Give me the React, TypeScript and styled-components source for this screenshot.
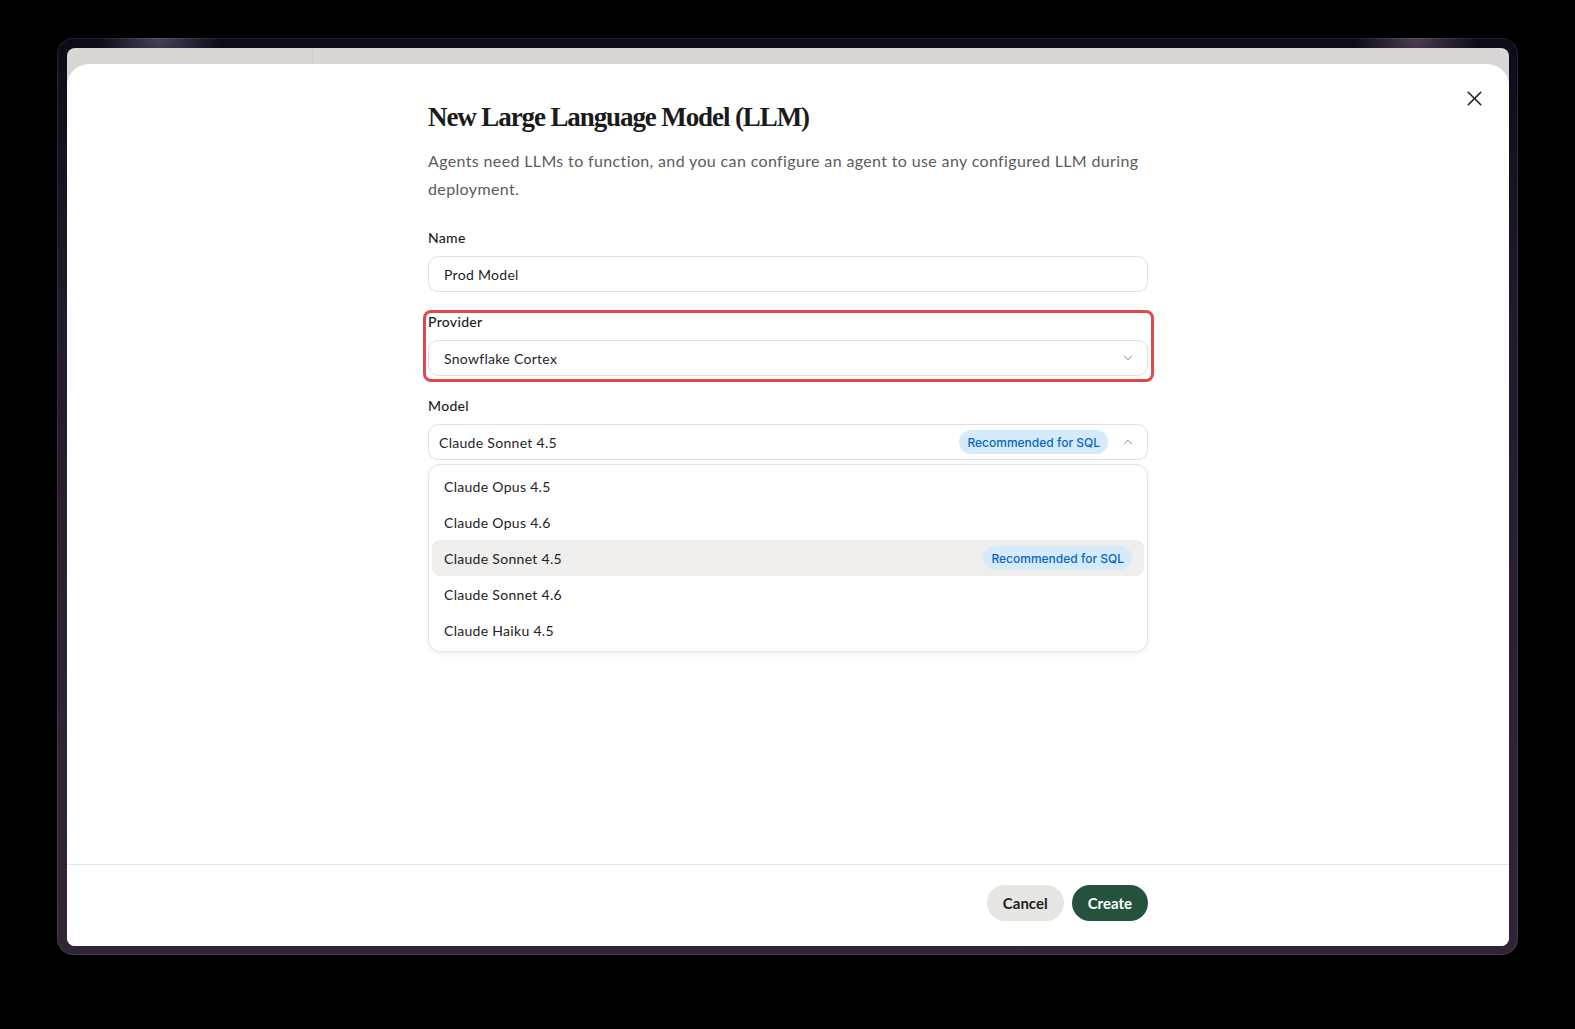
import styled, { createGlobalStyle } from "styled-components";
import { X, ChevronDown, ChevronUp } from "lucide-react";

const GlobalStyle = createGlobalStyle`
  html, body {
    margin: 0;
    background: #000;
  }
  * {
    box-sizing: border-box;
  }
`;

const Page = styled.div`
  min-height: 1029px;
  display: flex;
  justify-content: center;
  align-items: flex-start;
  padding-top: 38px;
  font-family: Lato, "DejaVu Sans", sans-serif;
  letter-spacing: 0.3px;
`;

const WindowFrame = styled.div`
  width: 1461px;
  height: 917px;
  padding: 10px 9px 9px 10px;
  border-radius: 16px;
  background: radial-gradient(circle at 7% 0%, rgba(120, 118, 150, 0.5), transparent 60px),
    radial-gradient(circle at 93% 0%, rgba(150, 120, 150, 0.45), transparent 60px),
    linear-gradient(180deg, #0e0b19 0%, #211a2a 30%, #2d2233 70%, #302435 100%);
  box-shadow: inset 0 0 0 1px rgba(255, 255, 255, 0.1);
`;

const Window = styled.div`
  width: 100%;
  height: 100%;
  display: flex;
  flex-direction: column;
  background: #d8d7d5;
  border-radius: 8px;
  overflow: hidden;
`;

const BackdropStrip = styled.div`
  height: 16px;
  display: flex;
  flex-shrink: 0;
`;

const GhostSidebar = styled.div`
  width: 246px;
  border-right: 1px solid #cfcecb;
`;

const Sheet = styled.div`
  flex: 1;
  display: flex;
  flex-direction: column;
  background: #fff;
  border-radius: 22px 22px 0 0;
`;

const Body = styled.div`
  flex: 1;
  display: grid;
  grid-template-columns: 1fr 720px 1fr;
`;

const Form = styled.div`
  grid-column: 2;
  display: flex;
  flex-direction: column;
  padding-top: 36px;
`;

const CloseButton = styled.button`
  grid-column: 3;
  justify-self: end;
  align-self: start;
  margin: 22px 22px 0 0;
  width: 25px;
  height: 25px;
  padding: 0;
  border: none;
  background: none;
  color: #1e1e1e;
  display: flex;
  align-items: center;
  justify-content: center;
  cursor: pointer;
`;

const Title = styled.h1`
  margin: 0;
  font-family: "Liberation Serif", "DejaVu Serif", serif;
  font-size: 27px;
  line-height: 34px;
  font-weight: 700;
  letter-spacing: -1.1px;
  color: #1b1b1b;
`;

const Description = styled.p`
  margin: 13px 0 0;
  font-size: 16px;
  line-height: 28px;
  letter-spacing: 0.36px;
  color: #5b5b5b;
`;

const Fields = styled.div`
  margin-top: 26px;
  display: flex;
  flex-direction: column;
  gap: 21px;
`;

const Field = styled.div<{ $highlight?: boolean }>`
  position: relative;
  display: flex;
  flex-direction: column;
  gap: 9px;

  &::after {
    content: "";
    display: ${(p) => (p.$highlight ? "block" : "none")};
    position: absolute;
    inset: -3px -6px -6px -5px;
    border: 3px solid #e2474c;
    border-radius: 8px;
    pointer-events: none;
  }
`;

const Label = styled.label`
  font-size: 14px;
  line-height: 18px;
  font-weight: 500;
  color: #1d1d1d;
`;

const TextInput = styled.input`
  width: 100%;
  height: 36px;
  padding: 0 15px;
  border: 1px solid #dedede;
  border-radius: 10px;
  font-family: inherit;
  font-size: 14px;
  letter-spacing: inherit;
  color: #1f1f1f;
  background: #fff;
  outline: none;
`;

const SelectBox = styled.div<{ $compact?: boolean }>`
  height: 36px;
  display: flex;
  align-items: center;
  gap: 13px;
  padding: 0 12px 0 ${(p) => (p.$compact ? "10px" : "15px")};
  border: 1px solid #dedede;
  border-radius: 10px;
  font-size: 14px;
  color: #1f1f1f;
  background: #fff;
`;

const SelectValue = styled.span`
  flex: 1;
`;

const Caret = styled.span`
  display: flex;
  color: #7a7a7a;
`;

const Badge = styled.span`
  display: inline-flex;
  align-items: center;
  height: 24px;
  padding: 0 8px;
  border-radius: 999px;
  background: #d5ebfc;
  color: #0a64c2;
  font-family: Inter, "DejaVu Sans", sans-serif;
  font-size: 12px;
  font-weight: 500;
  letter-spacing: 0;
`;

const Menu = styled.div`
  margin-top: 4px;
  padding: 3px;
  border: 1px solid #e4e4e4;
  border-radius: 12px;
  background: #fff;
  box-shadow: 0 2px 6px rgba(0, 0, 0, 0.06);
`;

const Option = styled.div<{ $active?: boolean }>`
  height: 36px;
  display: flex;
  align-items: center;
  justify-content: space-between;
  padding: 0 12px;
  border-radius: 8px;
  font-size: 14px;
  color: #222;
  background: ${(p) => (p.$active ? "#efeeec" : "transparent")};
`;

const Footer = styled.div`
  height: 82px;
  flex-shrink: 0;
  display: grid;
  grid-template-columns: 1fr 720px 1fr;
  padding-top: 20px;
  border-top: 1px solid #e6e6e6;
`;

const Actions = styled.div`
  grid-column: 2;
  display: flex;
  justify-content: flex-end;
  align-items: flex-start;
  gap: 8px;
`;

const Button = styled.button<{ $primary?: boolean }>`
  height: 36px;
  padding: 0 16px;
  border: none;
  border-radius: 18px;
  font-family: inherit;
  font-size: 15px;
  font-weight: 700;
  letter-spacing: 0;
  color: ${(p) => (p.$primary ? "#fff" : "#222")};
  background: ${(p) => (p.$primary ? "#25523d" : "#e6e5e1")};
  cursor: pointer;
`;

const models = [
  { name: "Claude Opus 4.5" },
  { name: "Claude Opus 4.6" },
  { name: "Claude Sonnet 4.5", recommended: true },
  { name: "Claude Sonnet 4.6" },
  { name: "Claude Haiku 4.5" },
];

const App = () => {
  const selected = "Claude Sonnet 4.5";
  return (
    <>
      <GlobalStyle />
      <Page>
        <WindowFrame>
          <Window>
            <BackdropStrip>
              <GhostSidebar />
            </BackdropStrip>
            <Sheet>
              <Body>
                <Form>
                  <Title>New Large Language Model (LLM)</Title>
                  <Description>
                    Agents need LLMs to function, and you can configure an agent to use any
                    configured LLM during deployment.
                  </Description>
                  <Fields>
                    <Field>
                      <Label>Name</Label>
                      <TextInput value="Prod Model" readOnly />
                    </Field>
                    <Field $highlight>
                      <Label>Provider</Label>
                      <SelectBox>
                        <SelectValue>Snowflake Cortex</SelectValue>
                        <Caret>
                          <ChevronDown size={14} strokeWidth={1.6} />
                        </Caret>
                      </SelectBox>
                    </Field>
                    <Field>
                      <Label>Model</Label>
                      <div>
                        <SelectBox $compact>
                          <SelectValue>{selected}</SelectValue>
                          <Badge>Recommended for SQL</Badge>
                          <Caret>
                            <ChevronUp size={14} strokeWidth={1.6} />
                          </Caret>
                        </SelectBox>
                        <Menu>
                          {models.map((m) => (
                            <Option key={m.name} $active={m.name === selected}>
                              <span>{m.name}</span>
                              {m.recommended && <Badge>Recommended for SQL</Badge>}
                            </Option>
                          ))}
                        </Menu>
                      </div>
                    </Field>
                  </Fields>
                </Form>
                <CloseButton aria-label="Close">
                  <X size={25} strokeWidth={1.5} />
                </CloseButton>
              </Body>
              <Footer>
                <Actions>
                  <Button>Cancel</Button>
                  <Button $primary>Create</Button>
                </Actions>
              </Footer>
            </Sheet>
          </Window>
        </WindowFrame>
      </Page>
    </>
  );
};

export default App;
